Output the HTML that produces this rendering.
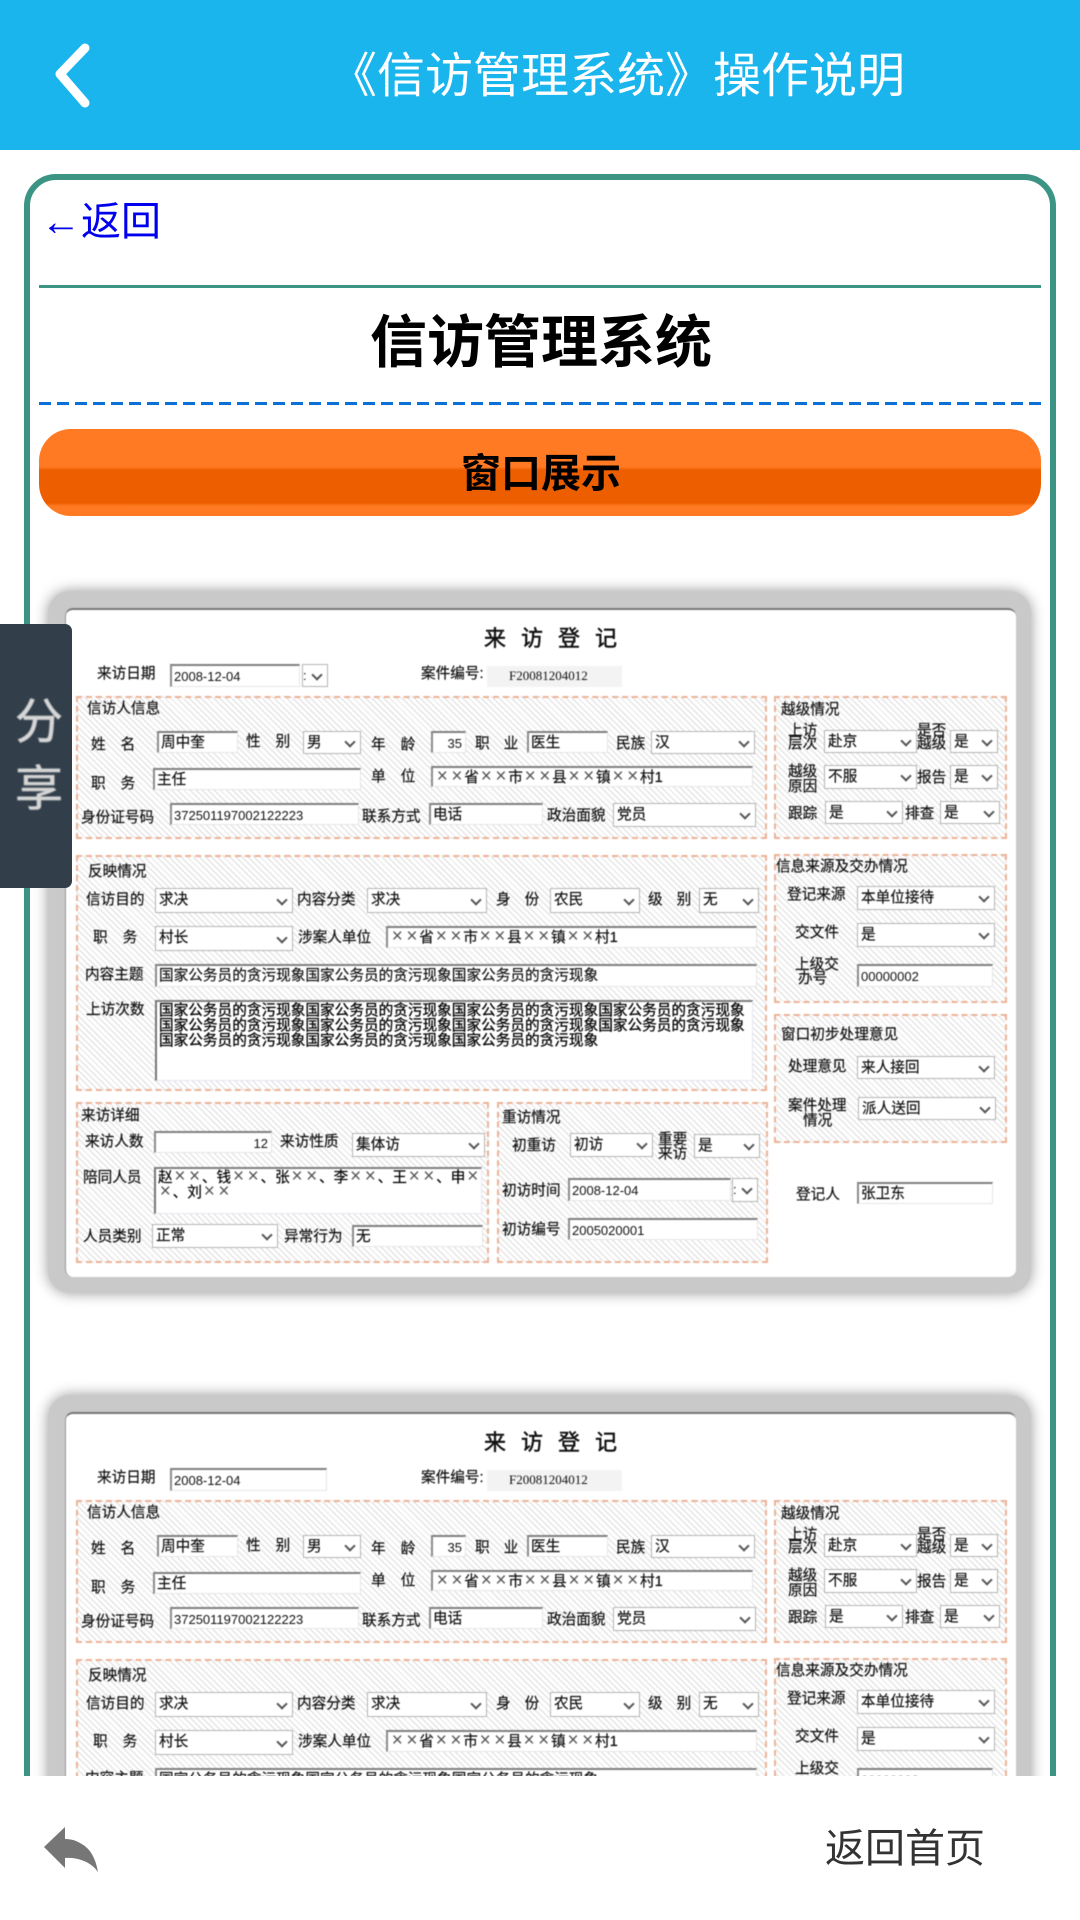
<!DOCTYPE html>
<html lang="zh-CN"><head><meta charset="utf-8"><title>《信访管理系统》操作说明</title>
<style>
*{box-sizing:border-box;margin:0;padding:0}
html,body{width:1080px;height:1920px;overflow:hidden;background:#fff}
body{position:relative;font-family:"Liberation Sans","WenQuanYi Zen Hei","Noto Sans CJK SC",sans-serif}
.a{position:absolute}
.form{position:absolute;left:0;width:1080px;height:700px;top:0;filter:blur(.4px)}
.frame{position:absolute;left:48px;top:591px;width:983px;height:702px;background:#c9c9c9;border-radius:22px;box-shadow:0 0 14px rgba(0,0,0,.4)}
.inner{position:absolute;left:65px;top:608px;width:951px;height:669px;background:#fff;border-radius:8px;border-top:2px solid #777;border-left:1px solid #999}
.fs{position:absolute;border:2px dashed #edb296;background:repeating-linear-gradient(45deg,#dcdcdc 0,#dcdcdc 1px,#fff 1px,#fff 4.3px)}
.t{position:absolute;font-size:14.65px;line-height:14.65px;color:#111;white-space:nowrap;-webkit-text-stroke:.2px #111}
.i,.s{position:absolute;background:#fff;font-size:14.65px;color:#111;white-space:nowrap;overflow:hidden;padding-left:2px;-webkit-text-stroke:.2px #111}
.i{border:1px solid #e6e6e6;border-top:2px solid #808080;border-left:2px solid #8c8c8c;line-height:21px}
.s{border:1.5px solid #b4b4b4;padding-left:3px;line-height:22px}
.s:after{content:"";position:absolute;right:6px;top:50%;width:6px;height:6px;margin-top:-5px;border-right:2px solid #555;border-bottom:2px solid #555;transform:rotate(45deg)}
.n{font-size:13px;-webkit-text-stroke:0}
u{text-decoration:none;display:inline-block;width:14.65px;text-align:center;color:#555;font-size:19px;line-height:0;-webkit-text-stroke:0}
.ta{position:absolute;background:#fff;border:1px solid #e6e6f0;border-top:2px solid #808080;border-left:2px solid #777;font-size:14.65px;line-height:15px;color:#000;padding:2px 0 0 2px;white-space:nowrap;overflow:hidden;-webkit-text-stroke:.3px #000}
</style></head><body>

<div class="a" style="left:0;top:0;width:1080px;height:150px;background:#1bb5ee"></div>
<svg class="a" style="left:0;top:0" width="120" height="150"><polyline points="85,48 60,74 85,103" fill="none" stroke="#fff" stroke-width="9" stroke-linecap="round" stroke-linejoin="round"/></svg>
<div class="a" style="left:329px;top:50px;font-size:48px;line-height:54px;color:#fff;white-space:nowrap">《信访管理系统》操作说明</div>

<div class="a" style="left:24px;top:174px;width:1032px;height:1700px;border:6px solid #3c9484;border-radius:32px;background:#fff"></div>
<div class="a" style="left:41px;top:199px;font-size:40px;line-height:46px;color:#0000ee;white-space:nowrap">←返回</div>
<div class="a" style="left:39px;top:285px;width:1002px;height:3px;background:#3c9484"></div>
<div class="a" style="left:0;top:313px;width:1082px;text-align:center;font-size:57px;line-height:60px;font-weight:bold;color:#000">信访管理系统</div>
<div class="a" style="left:39px;top:402px;width:1002px;height:3px;background:repeating-linear-gradient(90deg,#0d6fd8 0,#0d6fd8 12px,transparent 12px,transparent 18px)"></div>
<div class="a" style="left:39px;top:429px;width:1002px;height:87px;border-radius:32px;background:linear-gradient(#ff7a22 0,#ff7a22 38px,#ec5e00 41px,#ec5e00 74px,#ff7a22 77px)"></div>
<div class="a" style="left:0;top:451px;width:1082px;text-align:center;font-size:40px;line-height:46px;font-weight:bold;color:#000">窗口展示</div>

<!-- FIRST FORM -->
<div class="form">
<div class="frame"></div><div class="inner"></div>
<div class="t" style="left:484px;top:628px;font-size:22px;line-height:22px;letter-spacing:15px;-webkit-text-stroke:.5px #111">来访登记</div>
<div class="t" style="left:97px;top:667px">来访日期</div>
<div class="i n" style="left:170px;top:664px;width:130px;height:23px">2008-12-04</div>
<div class="s n" style="left:302px;top:664px;width:26px;height:23px;padding-left:0">:</div>
<div class="t" style="left:421px;top:667px">案件编号:</div>
<div class="a" style="left:487px;top:666px;width:135px;height:21px;background:#f3f3f3"></div>
<div class="t n" style="left:509px;top:669px;font-size:13px;line-height:13px;font-family:'Liberation Serif',serif">F20081204012</div>

<div class="fs" style="left:76px;top:696px;width:691px;height:143px"></div>
<div class="fs" style="left:774px;top:696px;width:233px;height:143px"></div>
<div class="fs" style="left:76px;top:855px;width:691px;height:236px"></div>
<div class="fs" style="left:774px;top:854px;width:233px;height:149px"></div>
<div class="fs" style="left:774px;top:1014px;width:233px;height:129px"></div>
<div class="fs" style="left:76px;top:1102px;width:413px;height:161px"></div>
<div class="fs" style="left:497px;top:1102px;width:271px;height:161px"></div>

<div class="t" style="left:87px;top:702px">信访人信息</div>
<div class="t" style="left:91px;top:738px;letter-spacing:15px">姓名</div>
<div class="i" style="left:157px;top:731px;width:81px;height:22px">周中奎</div>
<div class="t" style="left:246px;top:735px;letter-spacing:15px">性别</div>
<div class="s" style="left:303px;top:731px;width:58px;height:23px">男</div>
<div class="t" style="left:371px;top:738px;letter-spacing:15px">年龄</div>
<div class="i n" style="left:431px;top:731px;width:35px;height:22px;text-align:right;padding-right:3px">35</div>
<div class="t" style="left:475px;top:737px;letter-spacing:14px">职业</div>
<div class="i" style="left:527px;top:731px;width:81px;height:22px">医生</div>
<div class="t" style="left:616px;top:737px">民族</div>
<div class="s" style="left:651px;top:731px;width:104px;height:23px">汉</div>
<div class="t" style="left:91px;top:777px;letter-spacing:15px">职务</div>
<div class="i" style="left:153px;top:768px;width:208px;height:22px">主任</div>
<div class="t" style="left:371px;top:770px;letter-spacing:15px">单位</div>
<div class="i" style="left:431px;top:766px;width:322px;height:21px"><u>×</u><u>×</u>省<u>×</u><u>×</u>市<u>×</u><u>×</u>县<u>×</u><u>×</u>镇<u>×</u><u>×</u>村1</div>
<div class="t" style="left:81px;top:811px">身份证号码</div>
<div class="i n" style="left:170px;top:803px;width:189px;height:22px">372501197002122223</div>
<div class="t" style="left:362px;top:810px">联系方式</div>
<div class="i" style="left:429px;top:803px;width:114px;height:22px">电话</div>
<div class="t" style="left:547px;top:809px">政治面貌</div>
<div class="s" style="left:613px;top:803px;width:143px;height:24px">党员</div>

<div class="t" style="left:781px;top:703px">越级情况</div>
<div class="t" style="left:788px;top:725px;line-height:13px">上访<br>层次</div>
<div class="s" style="left:824px;top:730px;width:93px;height:23px">赴京</div>
<div class="t" style="left:917px;top:725px;line-height:13px">是否<br>越级</div>
<div class="s" style="left:950px;top:730px;width:48px;height:23px">是</div>
<div class="t" style="left:788px;top:765px;line-height:15px">越级<br>原因</div>
<div class="s" style="left:824px;top:765px;width:93px;height:24px">不服</div>
<div class="t" style="left:917px;top:771px">报告</div>
<div class="s" style="left:950px;top:765px;width:48px;height:24px">是</div>
<div class="t" style="left:788px;top:807px">跟踪</div>
<div class="s" style="left:825px;top:801px;width:78px;height:23px">是</div>
<div class="t" style="left:905px;top:807px">排查</div>
<div class="s" style="left:940px;top:801px;width:60px;height:23px">是</div>

<div class="t" style="left:88px;top:865px">反映情况</div>
<div class="t" style="left:86px;top:893px">信访目的</div>
<div class="s" style="left:155px;top:888px;width:138px;height:25px">求决</div>
<div class="t" style="left:297px;top:893px">内容分类</div>
<div class="s" style="left:367px;top:888px;width:120px;height:25px">求决</div>
<div class="t" style="left:496px;top:893px;letter-spacing:14px">身份</div>
<div class="s" style="left:550px;top:888px;width:90px;height:25px">农民</div>
<div class="t" style="left:648px;top:893px;letter-spacing:14px">级别</div>
<div class="s" style="left:699px;top:888px;width:60px;height:25px">无</div>
<div class="t" style="left:93px;top:931px;letter-spacing:15px">职务</div>
<div class="s" style="left:155px;top:926px;width:138px;height:25px">村长</div>
<div class="t" style="left:298px;top:931px">涉案人单位</div>
<div class="i" style="left:386px;top:926px;width:371px;height:22px"><u>×</u><u>×</u>省<u>×</u><u>×</u>市<u>×</u><u>×</u>县<u>×</u><u>×</u>镇<u>×</u><u>×</u>村1</div>
<div class="t" style="left:85px;top:968px">内容主题</div>
<div class="i" style="left:155px;top:964px;width:602px;height:23px">国家公务员的贪污现象国家公务员的贪污现象国家公务员的贪污现象</div>
<div class="t" style="left:86px;top:1003px">上访次数</div>
<div class="ta" style="left:155px;top:1000px;width:598px;height:81px">国家公务员的贪污现象国家公务员的贪污现象国家公务员的贪污现象国家公务员的贪污现象<br>国家公务员的贪污现象国家公务员的贪污现象国家公务员的贪污现象国家公务员的贪污现象<br>国家公务员的贪污现象国家公务员的贪污现象国家公务员的贪污现象</div>

<div class="t" style="left:81px;top:1109px">来访详细</div>
<div class="t" style="left:85px;top:1135px">来访人数</div>
<div class="i n" style="left:154px;top:1131px;width:118px;height:22px;text-align:right;padding-right:3px">12</div>
<div class="t" style="left:280px;top:1135px">来访性质</div>
<div class="s" style="left:352px;top:1133px;width:133px;height:24px">集体访</div>
<div class="t" style="left:83px;top:1171px">陪同人员</div>
<div class="ta" style="left:154px;top:1167px;width:328px;height:47px;-webkit-text-stroke:.2px #111">赵<u>×</u><u>×</u>、钱<u>×</u><u>×</u>、张<u>×</u><u>×</u>、李<u>×</u><u>×</u>、王<u>×</u><u>×</u>、申<u>×</u><br><u>×</u>、刘<u>×</u><u>×</u></div>
<div class="t" style="left:83px;top:1230px">人员类别</div>
<div class="s" style="left:152px;top:1224px;width:126px;height:24px">正常</div>
<div class="t" style="left:284px;top:1230px">异常行为</div>
<div class="i" style="left:352px;top:1225px;width:131px;height:22px">无</div>

<div class="t" style="left:502px;top:1111px">重访情况</div>
<div class="t" style="left:512px;top:1139px">初重访</div>
<div class="s" style="left:570px;top:1133px;width:83px;height:24px">初访</div>
<div class="t" style="left:658px;top:1133px;line-height:14px">重要<br>来访</div>
<div class="s" style="left:694px;top:1134px;width:66px;height:24px">是</div>
<div class="t" style="left:502px;top:1184px">初访时间</div>
<div class="i n" style="left:568px;top:1178px;width:163px;height:23px">2008-12-04</div>
<div class="s n" style="left:732px;top:1178px;width:26px;height:24px;padding-left:0">:</div>
<div class="t" style="left:502px;top:1223px">初访编号</div>
<div class="i n" style="left:568px;top:1218px;width:190px;height:22px">2005020001</div>

<div class="t" style="left:776px;top:860px">信息来源及交办情况</div>
<div class="t" style="left:787px;top:888px">登记来源</div>
<div class="s" style="left:857px;top:886px;width:138px;height:24px">本单位接待</div>
<div class="t" style="left:795px;top:926px">交文件</div>
<div class="s" style="left:857px;top:923px;width:138px;height:24px">是</div>
<div class="t" style="left:795px;top:958px">上级交</div>
<div class="t" style="left:798px;top:972px">办号</div>
<div class="i n" style="left:857px;top:964px;width:136px;height:23px">00000002</div>

<div class="t" style="left:781px;top:1028px">窗口初步处理意见</div>
<div class="t" style="left:788px;top:1060px">处理意见</div>
<div class="s" style="left:857px;top:1056px;width:138px;height:23px">来人接回</div>
<div class="t" style="left:788px;top:1099px">案件处理</div>
<div class="t" style="left:803px;top:1114px">情况</div>
<div class="s" style="left:858px;top:1097px;width:138px;height:23px">派人送回</div>
<div class="t" style="left:796px;top:1188px">登记人</div>
<div class="i" style="left:857px;top:1182px;width:136px;height:22px">张卫东</div>
</div>

<!-- SECOND FORM -->
<div class="form" style="top:804px;height:700px">
<div class="frame" style="height:450px"></div><div class="inner" style="height:400px"></div>
<div class="t" style="left:484px;top:628px;font-size:22px;line-height:22px;letter-spacing:15px;-webkit-text-stroke:.5px #111">来访登记</div>
<div class="t" style="left:97px;top:667px">来访日期</div>
<div class="i n" style="left:170px;top:664px;width:157px;height:23px">2008-12-04</div>
<div class="t" style="left:421px;top:667px">案件编号:</div>
<div class="a" style="left:487px;top:666px;width:135px;height:21px;background:#f3f3f3"></div>
<div class="t n" style="left:509px;top:669px;font-size:13px;line-height:13px;font-family:'Liberation Serif',serif">F20081204012</div>

<div class="fs" style="left:76px;top:696px;width:691px;height:143px"></div>
<div class="fs" style="left:774px;top:696px;width:233px;height:143px"></div>
<div class="fs" style="left:76px;top:855px;width:691px;height:150px"></div>
<div class="fs" style="left:774px;top:854px;width:233px;height:149px"></div>

<div class="t" style="left:87px;top:702px">信访人信息</div>
<div class="t" style="left:91px;top:738px;letter-spacing:15px">姓名</div>
<div class="i" style="left:157px;top:731px;width:81px;height:22px">周中奎</div>
<div class="t" style="left:246px;top:735px;letter-spacing:15px">性别</div>
<div class="s" style="left:303px;top:731px;width:58px;height:23px">男</div>
<div class="t" style="left:371px;top:738px;letter-spacing:15px">年龄</div>
<div class="i n" style="left:431px;top:731px;width:35px;height:22px;text-align:right;padding-right:3px">35</div>
<div class="t" style="left:475px;top:737px;letter-spacing:14px">职业</div>
<div class="i" style="left:527px;top:731px;width:81px;height:22px">医生</div>
<div class="t" style="left:616px;top:737px">民族</div>
<div class="s" style="left:651px;top:731px;width:104px;height:23px">汉</div>
<div class="t" style="left:91px;top:777px;letter-spacing:15px">职务</div>
<div class="i" style="left:153px;top:768px;width:208px;height:22px">主任</div>
<div class="t" style="left:371px;top:770px;letter-spacing:15px">单位</div>
<div class="i" style="left:431px;top:766px;width:322px;height:21px"><u>×</u><u>×</u>省<u>×</u><u>×</u>市<u>×</u><u>×</u>县<u>×</u><u>×</u>镇<u>×</u><u>×</u>村1</div>
<div class="t" style="left:81px;top:811px">身份证号码</div>
<div class="i n" style="left:170px;top:803px;width:189px;height:22px">372501197002122223</div>
<div class="t" style="left:362px;top:810px">联系方式</div>
<div class="i" style="left:429px;top:803px;width:114px;height:22px">电话</div>
<div class="t" style="left:547px;top:809px">政治面貌</div>
<div class="s" style="left:613px;top:803px;width:143px;height:24px">党员</div>

<div class="t" style="left:781px;top:703px">越级情况</div>
<div class="t" style="left:788px;top:725px;line-height:13px">上访<br>层次</div>
<div class="s" style="left:824px;top:730px;width:93px;height:23px">赴京</div>
<div class="t" style="left:917px;top:725px;line-height:13px">是否<br>越级</div>
<div class="s" style="left:950px;top:730px;width:48px;height:23px">是</div>
<div class="t" style="left:788px;top:765px;line-height:15px">越级<br>原因</div>
<div class="s" style="left:824px;top:765px;width:93px;height:24px">不服</div>
<div class="t" style="left:917px;top:771px">报告</div>
<div class="s" style="left:950px;top:765px;width:48px;height:24px">是</div>
<div class="t" style="left:788px;top:807px">跟踪</div>
<div class="s" style="left:825px;top:801px;width:78px;height:23px">是</div>
<div class="t" style="left:905px;top:807px">排查</div>
<div class="s" style="left:940px;top:801px;width:60px;height:23px">是</div>

<div class="t" style="left:88px;top:865px">反映情况</div>
<div class="t" style="left:86px;top:893px">信访目的</div>
<div class="s" style="left:155px;top:888px;width:138px;height:25px">求决</div>
<div class="t" style="left:297px;top:893px">内容分类</div>
<div class="s" style="left:367px;top:888px;width:120px;height:25px">求决</div>
<div class="t" style="left:496px;top:893px;letter-spacing:14px">身份</div>
<div class="s" style="left:550px;top:888px;width:90px;height:25px">农民</div>
<div class="t" style="left:648px;top:893px;letter-spacing:14px">级别</div>
<div class="s" style="left:699px;top:888px;width:60px;height:25px">无</div>
<div class="t" style="left:93px;top:931px;letter-spacing:15px">职务</div>
<div class="s" style="left:155px;top:926px;width:138px;height:25px">村长</div>
<div class="t" style="left:298px;top:931px">涉案人单位</div>
<div class="i" style="left:386px;top:926px;width:371px;height:22px"><u>×</u><u>×</u>省<u>×</u><u>×</u>市<u>×</u><u>×</u>县<u>×</u><u>×</u>镇<u>×</u><u>×</u>村1</div>
<div class="t" style="left:85px;top:968px">内容主题</div>
<div class="i" style="left:155px;top:964px;width:602px;height:23px">国家公务员的贪污现象国家公务员的贪污现象国家公务员的贪污现象</div>

<div class="t" style="left:776px;top:860px">信息来源及交办情况</div>
<div class="t" style="left:787px;top:888px">登记来源</div>
<div class="s" style="left:857px;top:886px;width:138px;height:24px">本单位接待</div>
<div class="t" style="left:795px;top:926px">交文件</div>
<div class="s" style="left:857px;top:923px;width:138px;height:24px">是</div>
<div class="t" style="left:795px;top:958px">上级交</div>
<div class="i n" style="left:857px;top:964px;width:136px;height:23px">00000002</div>
</div>

<!-- SHARE -->
<div class="a" style="left:0;top:624px;width:72px;height:264px;background:#323f4b;border-radius:0 7px 7px 0"></div>
<div class="a" style="left:15px;top:689px;width:48px;font-size:48px;line-height:67px;color:#d6d6d6;filter:blur(.8px);-webkit-text-stroke:.6px #d6d6d6">分<br>享</div>

<!-- BOTTOM BAR -->
<div class="a" style="left:0;top:1776px;width:1080px;height:144px;background:#fff"></div>
<svg class="a" style="left:0;top:1776px" width="120" height="144"><path fill="#767676" d="M65 51L44 71L65 92L65 82C74 81 90 84 98 96C96 85 92 73 80 67C75 64 70 63 65 63Z"/></svg>
<div class="a" style="left:825px;top:1826px;font-size:40px;line-height:46px;color:#333;white-space:nowrap">返回首页</div>
</body></html>
